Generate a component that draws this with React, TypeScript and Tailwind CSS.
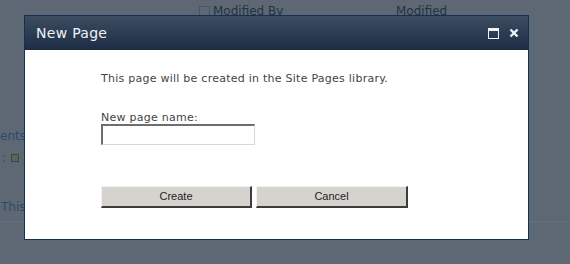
export default function App() {
  return (
    <div className="relative w-[570px] h-[264px] overflow-hidden bg-[#5d6874] font-['DejaVu_Sans',sans-serif]">
      {/* page behind the overlay */}
      <div className="flex items-center h-[22px] pl-[199px] text-[12px] text-[#27313e]">
        <span className="w-[11px] h-[11px] border border-[#4a5563] mr-[3px]" />
        <span className="w-[183px]">Modified By</span>
        <span>Modified</span>
      </div>
      <div className="mt-[107px] text-[12px] text-[#2c4a6d] leading-[14px]">
        <div>ents</div>
        <div className="flex items-center mt-[8px] pl-[2px] gap-[5px]">
          <span>:</span>
          <span className="w-[8px] h-[8px] bg-[#4c6a55] border border-[#3b4a3f]" />
        </div>
        <div className="mt-[35px] pl-[1px]">This</div>
      </div>
      <div className="mt-[7px] h-px bg-[#66717d]" />

      {/* dialog */}
      <div className="absolute left-[24px] top-[15px] w-[505px] h-[225px] border border-[#153152] bg-white flex flex-col">
        <div className="h-[34px] flex items-center justify-between pl-[11px] pr-[9px] bg-gradient-to-b from-[#3c4d62] to-[#1d2d43]">
          <span className="text-[14px] text-[#eef2f6] tracking-[0.3px]">New Page</span>
          <div className="flex items-center gap-[10px]">
            <svg width="11" height="11" viewBox="0 0 11 11">
              <rect x="0.5" y="0.5" width="10" height="10" fill="none" stroke="#f2f4f7" />
              <rect x="1" y="1" width="9" height="2" fill="#f2f4f7" />
            </svg>
            <svg width="10" height="10" viewBox="0 0 10 10">
              <path d="M1.5 1.5 L8.5 8.5 M8.5 1.5 L1.5 8.5" stroke="#f2f4f7" strokeWidth="2.4" />
            </svg>
          </div>
        </div>
        <div className="flex-1 pl-[76px] pt-[22px] text-[11px] text-[#444]">
          <p className="leading-[14px] tracking-[0.25px]">This page will be created in the Site Pages library.</p>
          <p className="mt-[25px] leading-[13px] tracking-[0.25px]">New page name:</p>
          <input className="block w-[154px] h-[21px] border-2 border-t-[#6e6e6e] border-l-[#6e6e6e] border-b-[#d8d8d8] border-r-[#d8d8d8] border-b-1 border-r-1 outline-none" />
          <div className="flex gap-[4px] mt-[41px] font-['Liberation_Sans',sans-serif] text-[11px] text-[#222]">
            <button className="w-[151px] h-[22px] bg-[#d6d3ce] border border-t-[#f4f2ee] border-l-[#f4f2ee] border-b-[#3c3c3c] border-r-[#3c3c3c] border-b-2 border-r-2">
              Create
            </button>
            <button className="w-[152px] h-[22px] bg-[#d6d3ce] border border-t-[#f4f2ee] border-l-[#f4f2ee] border-b-[#3c3c3c] border-r-[#3c3c3c] border-b-2 border-r-2">
              Cancel
            </button>
          </div>
        </div>
      </div>
    </div>
  );
}
